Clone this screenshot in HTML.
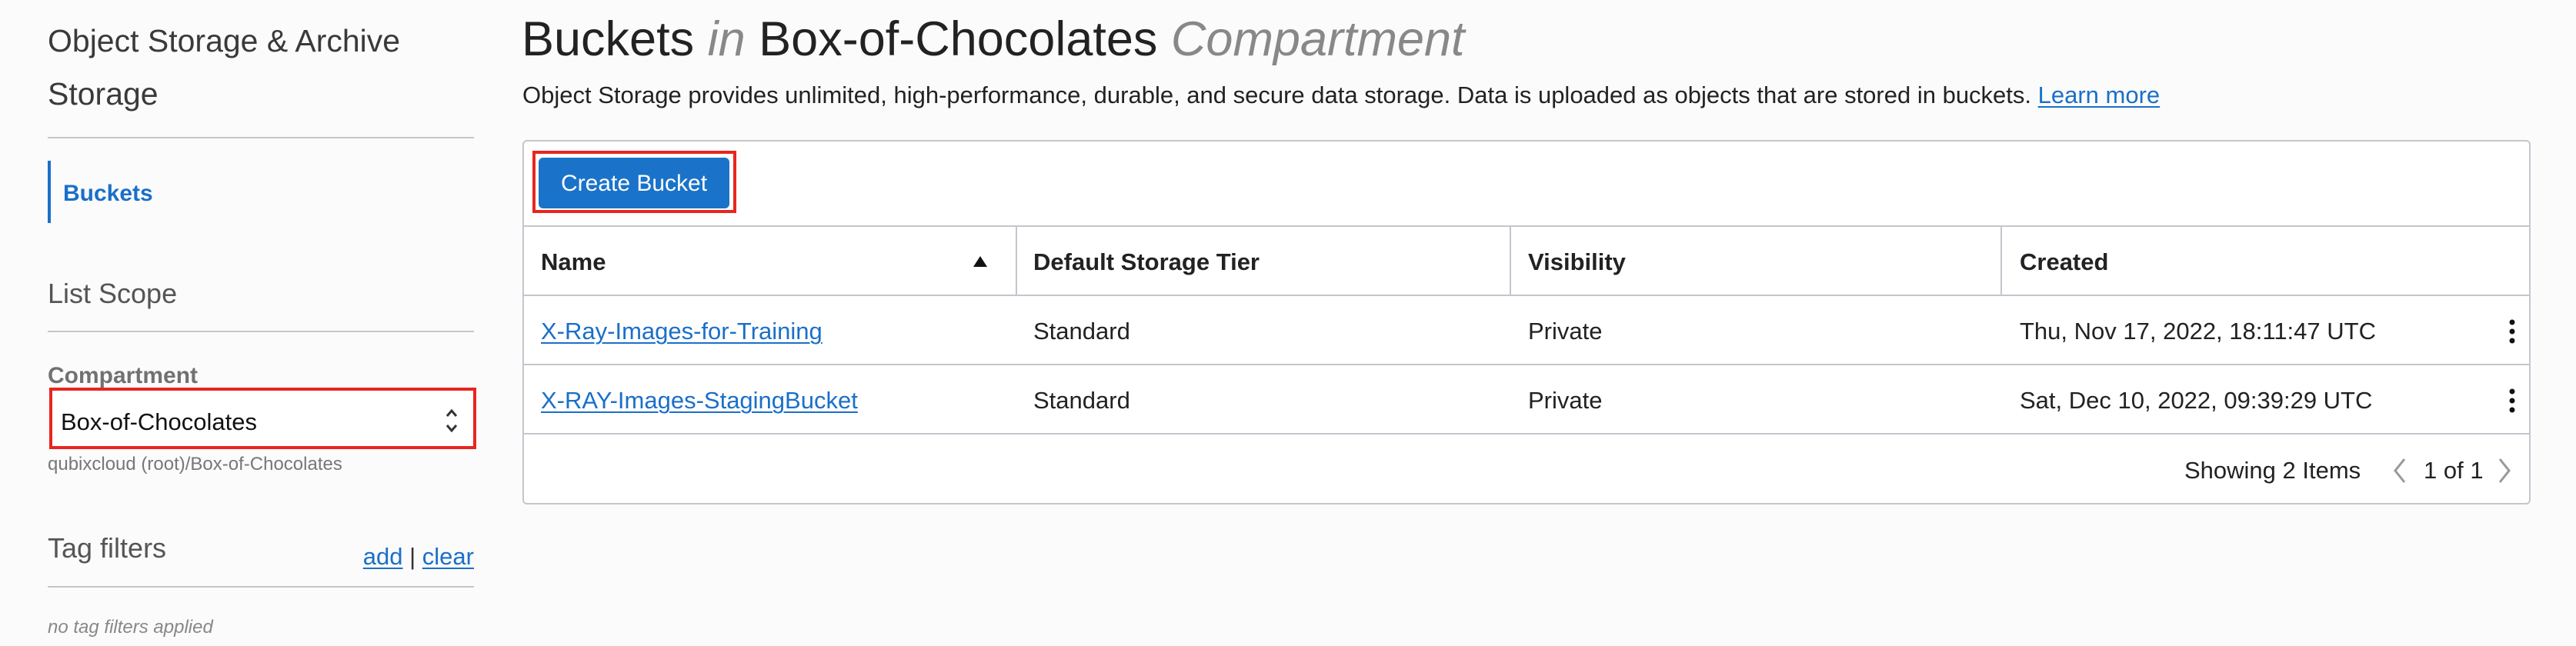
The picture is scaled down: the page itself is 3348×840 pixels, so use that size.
<!DOCTYPE html>
<html><head><meta charset="utf-8"><style>
*{margin:0;padding:0;box-sizing:border-box}
body{width:3348px;height:840px;background:#fbfbfb;font-family:"Liberation Sans",Arial,sans-serif;color:#222;position:relative;overflow:hidden}
.a{position:absolute;white-space:nowrap}
.lnk{color:#1a6fc9;text-decoration:underline;text-decoration-thickness:2px;text-underline-offset:4px}
.hr{position:absolute;height:2px;background:#c3c6cc}
.th{font-weight:bold;font-size:31px;color:#222}
.td{font-size:31px;color:#222}
.vl{position:absolute;width:2px;background:#c3c6cc}
</style></head><body>
<!-- Sidebar -->
<div class="a" style="left:62px;top:28px;font-size:41px;color:#3a3a3a;line-height:50px">Object Storage &amp; Archive</div>
<div class="a" style="left:62px;top:97px;font-size:41px;color:#3a3a3a;line-height:50px">Storage</div>
<div class="hr" style="left:62px;top:178px;width:554px"></div>
<div class="a" style="left:62px;top:209px;width:4px;height:81px;background:#1a6fc9"></div>
<div class="a" style="left:82px;top:234px;font-size:30px;font-weight:bold;color:#1a6fc9;line-height:36px">Buckets</div>
<div class="a" style="left:62px;top:360px;font-size:36px;color:#555;line-height:44px">List Scope</div>
<div class="hr" style="left:62px;top:430px;width:554px"></div>
<div class="a" style="left:62px;top:471px;font-size:30px;color:#5a5a5a;font-weight:bold;line-height:36px;opacity:.85">Compartment</div>
<div class="a" style="left:64px;top:504px;width:555px;height:80px;border:4px solid #e8261e;background:#fff"></div>
<div class="a" style="left:79px;top:530px;font-size:31px;color:#111;line-height:38px">Box-of-Chocolates</div>
<svg class="a" style="left:578px;top:528px" width="18" height="38" viewBox="0 0 18 38"><path d="M3 13 L9 6 L15 13 M3 25 L9 32 L15 25" fill="none" stroke="#333" stroke-width="3"/></svg>
<div class="a" style="left:62px;top:590px;font-size:24px;color:#777;line-height:28px">qubixcloud (root)/Box-of-Chocolates</div>
<div class="a" style="left:62px;top:691px;font-size:36px;color:#555;line-height:44px">Tag filters</div>
<div class="a" style="right:2732px;top:705px;font-size:31px;color:#333;line-height:38px"><span class="lnk">add</span> | <span class="lnk">clear</span></div>
<div class="hr" style="left:62px;top:762px;width:554px"></div>
<div class="a" style="left:62px;top:802px;font-size:24px;font-style:italic;color:#888;line-height:28px">no tag filters applied</div>
<!-- Main -->
<div class="a" style="left:678px;top:14px;font-size:63px;color:#222;line-height:74px">Buckets <i style="color:#888">in</i> Box-of-Chocolates <i style="color:#888">Compartment</i></div>
<div class="a" style="left:679px;top:106px;font-size:31px;color:#222;line-height:36px">Object Storage provides unlimited, high-performance, durable, and secure data storage. Data is uploaded as objects that are stored in buckets. <span class="lnk">Learn more</span></div>
<div class="a" style="left:679px;top:182px;width:2610px;height:474px;border:2px solid #c3c6cc;border-radius:6px;background:#fff"></div>
<div class="a" style="left:692px;top:196px;width:265px;height:81px;border:4px solid #e8261e"></div>
<div class="a" style="left:700px;top:205px;width:248px;height:66px;background:#1a73c9;border-radius:6px;color:#fff;font-size:30px;line-height:68px;text-align:center">Create Bucket</div>
<div class="hr" style="left:679px;top:293px;width:2610px"></div>
<div class="hr" style="left:679px;top:383px;width:2610px"></div>
<div class="hr" style="left:679px;top:473px;width:2610px"></div>
<div class="hr" style="left:679px;top:563px;width:2610px"></div>
<div class="vl" style="left:1320px;top:294px;height:90px"></div>
<div class="vl" style="left:1962px;top:294px;height:90px"></div>
<div class="vl" style="left:2600px;top:294px;height:90px"></div>
<div class="a th" style="left:703px;top:323px">Name</div>
<svg class="a" style="left:1263px;top:331px" width="22" height="18"><path d="M11 2 L20 16 L2 16 Z" fill="#111"/></svg>
<div class="a th" style="left:1343px;top:323px">Default Storage Tier</div>
<div class="a th" style="left:1986px;top:323px">Visibility</div>
<div class="a th" style="left:2625px;top:323px">Created</div>
<div class="a td" style="left:703px;top:413px"><span class="lnk">X-Ray-Images-for-Training</span></div>
<div class="a td" style="left:1343px;top:413px">Standard</div>
<div class="a td" style="left:1986px;top:413px">Private</div>
<div class="a td" style="left:2625px;top:413px">Thu, Nov 17, 2022, 18:11:47 UTC</div>
<div class="a td" style="left:703px;top:503px"><span class="lnk">X-RAY-Images-StagingBucket</span></div>
<div class="a td" style="left:1343px;top:503px">Standard</div>
<div class="a td" style="left:1986px;top:503px">Private</div>
<div class="a td" style="left:2625px;top:503px">Sat, Dec 10, 2022, 09:39:29 UTC</div>
<svg class="a" style="left:3258px;top:414px" width="14" height="34"><circle cx="7" cy="5" r="3.5" fill="#111"/><circle cx="7" cy="17" r="3.5" fill="#111"/><circle cx="7" cy="29" r="3.5" fill="#111"/></svg>
<svg class="a" style="left:3258px;top:504px" width="14" height="34"><circle cx="7" cy="5" r="3.5" fill="#111"/><circle cx="7" cy="17" r="3.5" fill="#111"/><circle cx="7" cy="29" r="3.5" fill="#111"/></svg>
<div class="a td" style="left:2839px;top:594px">Showing 2 Items</div>
<svg class="a" style="left:3106px;top:594px" width="24" height="36"><path d="M19 3 L7 18 L19 33" fill="none" stroke="#999" stroke-width="3"/></svg>
<div class="a td" style="left:3150px;top:594px">1 of 1</div>
<svg class="a" style="left:3244px;top:594px" width="24" height="36"><path d="M5 3 L17 18 L5 33" fill="none" stroke="#999" stroke-width="3"/></svg>
</body></html>
